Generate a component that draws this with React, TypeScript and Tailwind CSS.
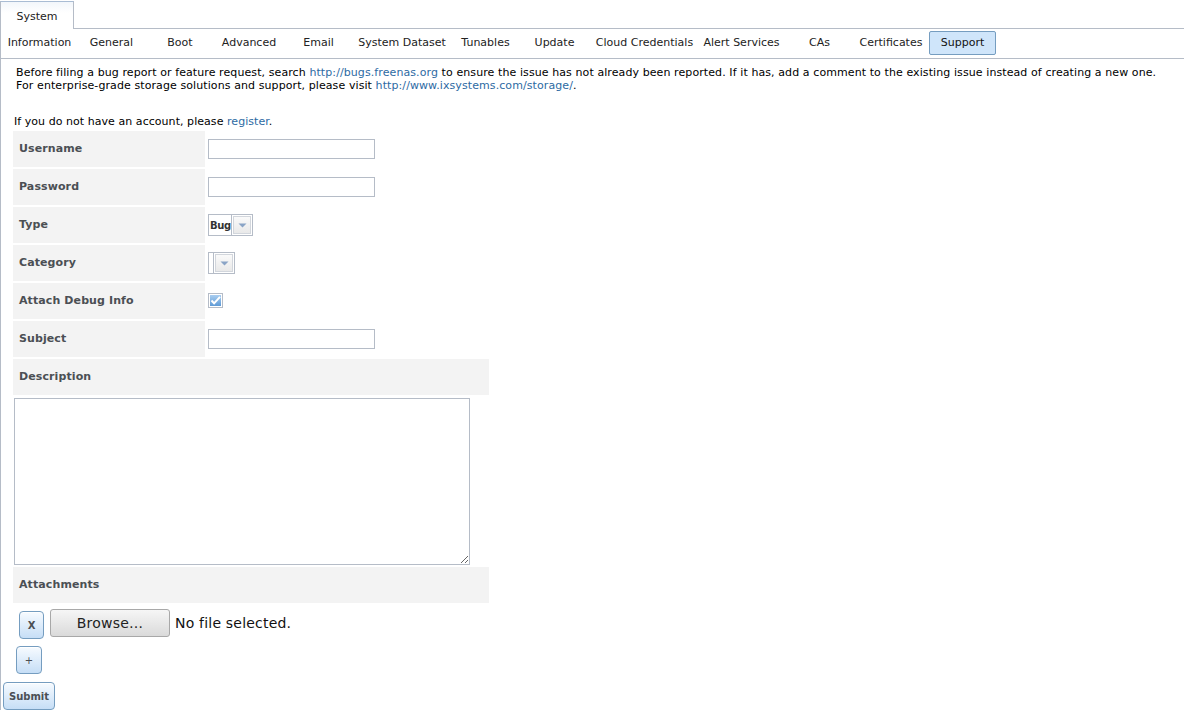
const tabs = [
  { label: 'Information', w: 'w-[79px]' },
  { label: 'General', w: 'w-[65px]' },
  { label: 'Boot', w: 'w-[72px]' },
  { label: 'Advanced', w: 'w-[66px]' },
  { label: 'Email', w: 'w-[73px]' },
  { label: 'System Dataset', w: 'w-[94px]' },
  { label: 'Tunables', w: 'w-[73px]' },
  { label: 'Update', w: 'w-[65px]' },
  { label: 'Cloud Credentials', w: 'w-[115px]' },
  { label: 'Alert Services', w: 'w-[79px]' },
  { label: 'CAs', w: 'w-[77px]' },
  { label: 'Certificates', w: 'w-[66px]' },
];

const blueBtn =
  'flex items-center justify-center rounded-[4px] border border-[#759dc0] bg-gradient-to-b from-[#f7fbff] to-[#c6def6] font-bold text-[10px] text-[#4b4f54] shadow-[inset_0_1px_0_#ffffff]';

function Arrow() {
  return (
    <svg width="9" height="5" viewBox="0 0 9 5">
      <path d="M0.5 0.5h8L4.5 4.5z" fill="#8aa4c6" />
    </svg>
  );
}

function SelectBox({ value, textW }: { value: string; textW: string }) {
  return (
    <div className="ml-px flex h-[22px] border border-[#b5bcc7] bg-white">
      <div className={`${textW} flex items-center overflow-hidden border-r border-[#b5bcc7] pl-px text-[10px] font-bold tracking-[-0.4px] text-[#333]`}>
        {value}
      </div>
      <div className="flex w-[20px] items-center justify-center">
        <div className="flex h-[18px] w-[18px] items-center justify-center border border-[#d2d6dc] bg-gradient-to-b from-[#fafafa] to-[#e9e9e9]">
          <Arrow />
        </div>
      </div>
    </div>
  );
}

function Label({ children, wide }: { children: React.ReactNode; wide?: boolean }) {
  return (
    <div
      className={`${wide ? 'col-span-2' : ''} flex h-[36px] items-center bg-[#f3f3f3] px-[6px] text-[11px] font-bold tracking-[0.1px] text-[#4b4f54]`}
    >
      {children}
    </div>
  );
}

function Field({ children }: { children?: React.ReactNode }) {
  return <div className="flex h-[36px] items-center">{children}</div>;
}

function TextInput() {
  return <input type="text" className="ml-px h-[20px] w-[167px] border border-[#b5bcc7] bg-white outline-none" />;
}

export default function App() {
  return (
    <div className="h-[717px] w-full overflow-hidden bg-white font-['DejaVu_Sans',sans-serif] text-[11px] text-black">
      {/* top tab strip */}
      <div className="flex h-[29px] items-end">
        <div className="flex h-[28px] w-[74px] items-center justify-center border border-b-0 border-[#b5bcc7] border-t-[#a9bcd4] bg-gradient-to-b from-[#f2f6fb] to-white to-40% pt-[4px] text-[11px] text-[#222]">
          System
        </div>
        <div className="h-[29px] flex-1 border-b border-[#b5bcc7]" />
      </div>

      <div className="border-l border-[#b5bcc7]">
        {/* sub tabs */}
        <div className="-ml-px flex h-[30px] items-start border-b border-[#b5bcc7]">
          {tabs.map((t) => (
            <div key={t.label} className={`${t.w} flex h-[28px] shrink-0 items-center justify-center whitespace-nowrap pt-px text-[11px] text-[#222]`}>
              {t.label}
            </div>
          ))}
          <div className="ml-[5px] mt-[2px] flex h-[24px] w-[67px] items-center justify-center rounded-[2px] border border-[#759dc0] bg-[#cfe5fa] pt-px text-[11px] text-[#111]">
            Support
          </div>
        </div>

        <div className="pl-[10px]">
          <div className="pl-[5px] pt-[7px] leading-[13px] tracking-[0.09px]">
            <div className="whitespace-nowrap">
              Before filing a bug report or feature request, search{' '}
              <a className="text-[#2d6aa3]">http://bugs.freenas.org</a> to ensure the issue has not already been
              reported. If it has, add a comment to the existing issue instead of creating a new one.
            </div>
            <div className="whitespace-nowrap">
              For enterprise-grade storage solutions and support, please visit{' '}
              <a className="text-[#2d6aa3]">http://www.ixsystems.com/storage/</a>.
            </div>
          </div>

          <div className="mt-[23px] pl-[3px] leading-[13px] tracking-[0.05px]">
            If you do not have an account, please <a className="text-[#2d6aa3]">register</a>.
          </div>

          <div className="mt-[1px] grid w-fit grid-cols-[192px_282px] gap-[2px] p-[2px]">
            <Label>Username</Label>
            <Field>
              <TextInput />
            </Field>
            <Label>Password</Label>
            <Field>
              <input type="password" className="ml-px h-[20px] w-[167px] border border-[#b5bcc7] bg-white outline-none" />
            </Field>
            <Label>Type</Label>
            <Field>
              <SelectBox value="Bug" textW="w-[23px]" />
            </Field>
            <Label>Category</Label>
            <Field>
              <SelectBox value="" textW="w-[5px]" />
            </Field>
            <Label>Attach Debug Info</Label>
            <Field>
              <svg width="16" height="15" viewBox="0 0 16 15" className="-mt-[2px] ml-px">
                <rect x="0.5" y="0.5" width="14" height="14" fill="#ffffff" stroke="#b5bcc7" />
                <defs>
                  <linearGradient id="cb" x1="0" y1="0" x2="0" y2="1">
                    <stop offset="0" stopColor="#a9cdf0" />
                    <stop offset="1" stopColor="#5f9bd6" />
                  </linearGradient>
                </defs>
                <rect x="2" y="2" width="11" height="11" fill="url(#cb)" />
                <path d="M3.5 7.5l2.6 2.8L12 3.8" fill="none" stroke="#ffffff" strokeWidth="2" />
              </svg>
            </Field>
            <Label>Subject</Label>
            <Field>
              <TextInput />
            </Field>
            <Label wide>Description</Label>
            <div className="col-span-2 h-[168px]">
              <textarea className="ml-px mt-px block h-[167px] w-[456px] border border-[#b5bcc7] bg-white outline-none" />
            </div>
            <Label wide>Attachments</Label>
          </div>

          <div className="flex items-start">
            <div className={`${blueBtn} ml-[8px] mt-[6px] h-[28px] w-[25px]`}>X</div>
            <div className="ml-[6px] mt-[4px] flex items-center">
              <div className="flex h-[28px] w-[120px] items-center justify-center rounded-[3px] border border-[#a8a8a8] bg-gradient-to-b from-[#f6f6f6] to-[#dadada] text-[14px] tracking-[0.2px] text-[#222]">
                Browse…
              </div>
              <span className="ml-[5px] text-[14px] tracking-[0.2px] text-[#111]">No file selected.</span>
            </div>
          </div>

          <div className={`${blueBtn} ml-[5px] mt-[7px] h-[28px] w-[26px] font-normal`}>+</div>
        </div>

        <div className={`${blueBtn} ml-[2px] mt-[8px] h-[28px] w-[52px]`}>Submit</div>
      </div>
    </div>
  );
}
